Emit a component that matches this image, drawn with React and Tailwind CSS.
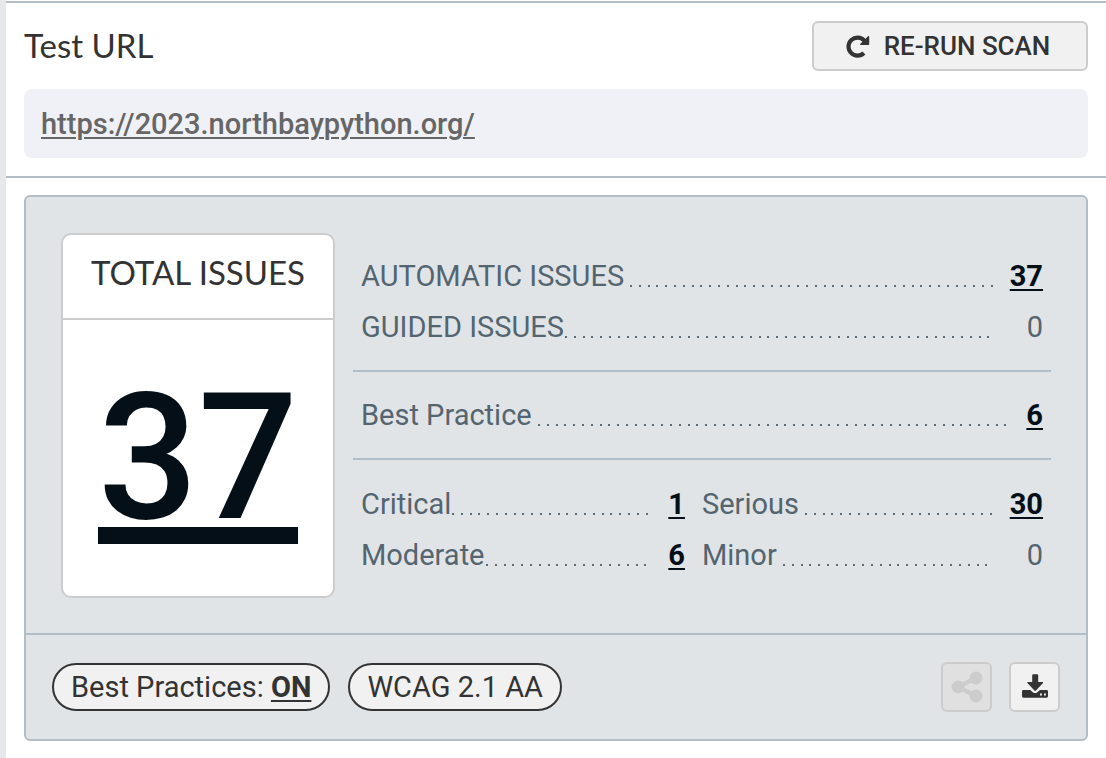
import React from "react";

const leaderDots =
  "bg-[linear-gradient(90deg,#5b6b78_0_2px,transparent_2px_9px,#5b6b78_9px_11px,transparent_11px_18px,#5b6b78_18px_20px,transparent_20px_26px,#5b6b78_26px_28px,transparent_28px_35px,#5b6b78_35px_37px,transparent_37px)] bg-[length:44px_2px] bg-repeat-x";

function RerunIcon() {
  return (
    <svg className="h-6 w-6" viewBox="0 0 24 24" fill="none" aria-hidden="true">
      <path
        d="M18.2 6.6A9 9 0 1 0 17.9 19"
        stroke="currentColor"
        strokeWidth="4.2"
      />
      <path
        d="M22 2.2 14.2 10q-.5.9.5.9h7.6q.9 0 .9-.9V2.6q-.3-1-1.2-.4z"
        fill="currentColor"
      />
    </svg>
  );
}

function ShareIcon() {
  return (
    <svg className="h-8 w-8" viewBox="0 0 32 32" fill="currentColor" aria-hidden="true">
      <path d="M25 7 7 16l18 9" fill="none" stroke="currentColor" strokeWidth="4.2" />
      <circle cx="7" cy="16" r="6.5" />
      <circle cx="25" cy="7" r="6.5" />
      <circle cx="25" cy="25" r="6.5" />
    </svg>
  );
}

function DownloadIcon() {
  return (
    <svg className="h-[26px] w-[26px]" viewBox="0 1 26 26" fill="currentColor" aria-hidden="true">
      <path d="M10.2 2.2q0-1 1-1h4q1 0 1 1v6.900h4.400q1 .1.4 1l-7 7.300q-.8.7-1.600 0l-7-7.300q-.6-.9.4-1h4.400z" />
      <path
        fillRule="evenodd"
        d="M1.400 17h6.900l2.500 2.200q2.300 1.800 4.600 0l2.500-2.200h6.700q1.400 0 1.400 1.400v4.900q0 1.400-1.400 1.400H1.400Q0 24.700 0 23.300v-4.900Q0 17 1.400 17zM18 20.600v1.800h1.900v-1.800zm4 0v1.800h1.900v-1.800z"
      />
    </svg>
  );
}

function Row({ label, count, snug = false, wide = false }) {
  return (
    <div className="flex h-[51px] items-center">
      <dt className="text-[#546570]">{label}</dt>
      <dd className="flex flex-1 items-center">
        <span
          className={`mt-5 mr-[17px] h-[2px] flex-1 ${snug ? "ml-px" : "ml-1.5"} ${leaderDots}`}
        />
        <span className={`text-right ${wide ? "min-w-[33px]" : ""}`}>
          {count > 0 ? (
            <a
              href="#issues"
              className="font-bold text-[#040f17] underline decoration-2 underline-offset-3"
            >
              {count}
            </a>
          ) : (
            <span className="text-[#546570]">{count}</span>
          )}
        </span>
      </dd>
    </div>
  );
}

export default function App() {
  return (
    <div className="min-h-screen border-l-6 border-[#e6e7e9] bg-white pt-px font-['Roboto',sans-serif] text-[29px] leading-8 text-[#333]">
      <header className="border-y-2 border-[#b3bdc5] px-[18px] pt-[18px] pb-[18px]">
        <div className="flex items-center justify-between">
          <h2 className="pb-0.5 font-['Lato',sans-serif] text-[33px] leading-10">Test URL</h2>
          <button className="flex h-[50px] w-[276px] items-center justify-center gap-3.5 rounded-md border-2 border-[#ccc] bg-[#f1f1f1] pr-1 text-[26px] font-medium">
            <RerunIcon />
            RE-RUN SCAN
          </button>
        </div>
        <div className="mt-[18px] flex h-[69px] items-center rounded-lg bg-[#f0f1f6] px-[17px]">
          <a
            href="https://2023.northbaypython.org/"
            className="font-medium text-[#666] underline decoration-2 underline-offset-3"
          >
            https://2023.northbaypython.org/
          </a>
        </div>
      </header>

      <main className="px-[18px] py-[17px]">
        <section className="rounded-md border-2 border-[#b3bdc5] bg-[#e0e4e6]">
          <div className="flex gap-[18px] px-[35px] pt-9 pb-[35px]">
            <div className="flex w-[274px] shrink-0 flex-col rounded-[10px] border-2 border-[#ccc] bg-white">
              <h3 className="flex h-[85px] items-center justify-center border-b-2 border-[#ccc] pb-2.5 font-['Lato',sans-serif] text-[33px]">
                TOTAL ISSUES
              </h3>
              <div className="flex h-[276px] items-center justify-center">
                <a
                  href="#issues"
                  className="text-[176px] leading-none font-medium text-[#040f17] underline decoration-[17px] underline-offset-[9px] [text-decoration-skip-ink:none]"
                >
                  37
                </a>
              </div>
            </div>

            <div className="flex-1 pt-[17px]">
              <dl className="border-b-2 border-[#b3bdc5] px-2 pb-[18px]">
                <Row label="AUTOMATIC ISSUES" count={37} wide />
                <Row label="GUIDED ISSUES" count={0} snug wide />
              </dl>
              <dl className="border-b-2 border-[#b3bdc5] px-2 pt-[17px] pb-[18px]">
                <Row label="Best Practice" count={6} />
              </dl>
              <dl className="grid grid-cols-[19fr_20fr] gap-x-[17px] px-2 pt-[18px]">
                <Row label="Critical" count={1} snug />
                <Row label="Serious" count={30} wide />
                <Row label="Moderate" count={6} snug />
                <Row label="Minor" count={0} wide />
              </dl>
            </div>
          </div>

          <footer className="flex items-center justify-between border-t-2 border-[#b3bdc5] px-[26px] py-[27px]">
            <div className="flex gap-[18px]">
              <button className="h-12 rounded-full border-2 border-[#333] bg-[#f1f1f1] px-[17px]">
                Best Practices:{" "}
                <span className="font-bold underline decoration-2 underline-offset-3">ON</span>
              </button>
              <span className="flex h-12 items-center rounded-full border-2 border-[#333] bg-[#f1f1f1] px-[17px]">
                WCAG 2.1 AA
              </span>
            </div>
            <div className="flex gap-[17px]">
              <button
                disabled
                aria-label="Share"
                className="flex h-[50px] w-[51px] items-center justify-center rounded-md border-2 border-[#ccc] bg-[#e0e0e0] text-[#ccc]"
              >
                <ShareIcon />
              </button>
              <button
                aria-label="Download"
                className="flex h-[50px] w-[51px] items-center justify-center rounded-md border-2 border-[#ccc] bg-[#f1f1f1]"
              >
                <DownloadIcon />
              </button>
            </div>
          </footer>
        </section>
      </main>
    </div>
  );
}
